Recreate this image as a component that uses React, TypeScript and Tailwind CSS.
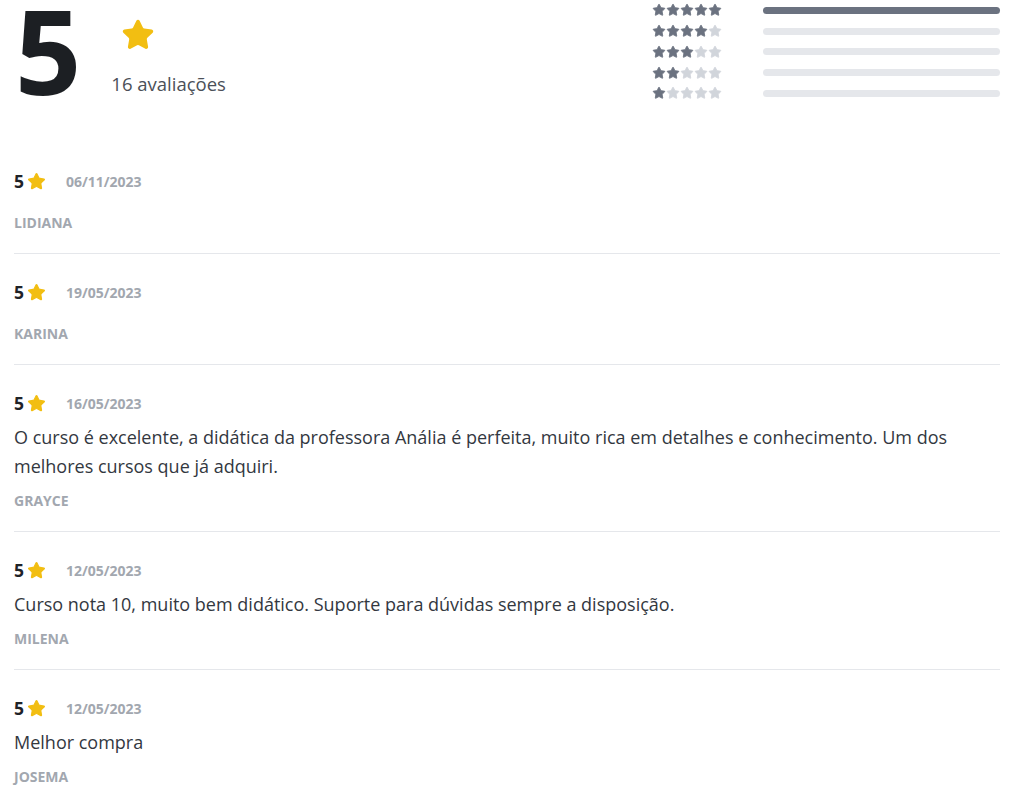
import React from "react";

const StarIcon = ({ className }: { className?: string }) => (
  <svg viewBox="0 0 24 24" className={className} fill="currentColor" stroke="currentColor" strokeWidth={1.5} strokeLinejoin="round" strokeLinecap="round">
    <path d="M11.525 2.295a.53.53 0 0 1 .95 0l2.31 4.679a2.123 2.123 0 0 0 1.595 1.16l5.166.756a.53.53 0 0 1 .294.904l-3.736 3.638a2.123 2.123 0 0 0-.611 1.878l.882 5.14a.53.53 0 0 1-.771.56l-4.618-2.428a2.122 2.122 0 0 0-1.973 0L6.396 21.01a.53.53 0 0 1-.77-.56l.881-5.139a2.122 2.122 0 0 0-.611-1.879L2.16 9.795a.53.53 0 0 1 .294-.906l5.165-.755a2.122 2.122 0 0 0 1.597-1.16z" />
  </svg>
);

const reviews = [
  { date: "06/11/2023", name: "LIDIANA", text: "" },
  { date: "19/05/2023", name: "KARINA", text: "" },
  {
    date: "16/05/2023",
    name: "GRAYCE",
    text: "O curso é excelente, a didática da professora Anália é perfeita, muito rica em detalhes e conhecimento. Um dos melhores cursos que já adquiri.",
  },
  { date: "12/05/2023", name: "MILENA", text: "Curso nota 10, muito bem didático. Suporte para dúvidas sempre a disposição." },
  { date: "12/05/2023", name: "JOSEMA", text: "Melhor compra" },
];

export default function App() {
  const font = { fontFamily: "'Open Sans', Lato, sans-serif" };
  return (
    <div className="w-[1024px] h-[787px] overflow-hidden bg-white pl-[14px] pr-[24px]" style={font}>
      <div className="flex justify-between h-[143px]">
        <div className="flex items-start">
          <div className="text-[116px] leading-[100px] font-bold text-[#1c1f23] ml-[1px]">5</div>
          <div className="flex flex-col ml-[32px]">
            <StarIcon className="w-[34px] h-[34px] text-[#f2be12] mt-[18px] ml-[8px]" />
            <div className="text-[18.5px] text-[#4b5058] mt-[18px] ml-[-2px]">16 avaliações</div>
          </div>
        </div>
        <div className="flex flex-col w-[348px]">
          {[5, 4, 3, 2, 1].map((n) => (
            <div key={n} className="flex items-center h-[20.75px]">
              <div className="flex w-[70px]">
                {[1, 2, 3, 4, 5].map((i) => (
                  <StarIcon key={i} className={`w-[14px] h-[14px] ${i <= n ? "text-[#6b7280]" : "text-[#d1d5db]"}`} />
                ))}
              </div>
              <div className={`ml-[41px] w-[237px] h-[7px] rounded-full ${n === 5 ? "bg-[#6b7280]" : "bg-[#e5e7eb]"}`} />
            </div>
          ))}
        </div>
      </div>
      <div>
        {reviews.map((r, idx) => (
          <div key={idx} className={`pt-[26px] pb-[20px] ${idx < reviews.length - 1 ? "border-b border-[#e5e7eb]" : ""}`}>
            <div className="flex items-center h-[24px]">
              <span className="text-[17.5px] font-bold text-[#1f2328]">5</span>
              <StarIcon className="w-[19px] h-[19px] text-[#f2be12] ml-[3px]" />
              <span className="ml-[20px] text-[14px] font-bold text-[#a2a7af]">{r.date}</span>
            </div>
            {r.text ? (
              <div className="mt-[8px] text-[18px] leading-[29px] text-[#33383f]">{r.text}</div>
            ) : null}
            <div className={`${r.text ? "mt-[10px]" : "mt-[20px]"} h-[20px] leading-[20px] text-[14px] font-bold text-[#a2a7af]`}>
              {r.name}
            </div>
          </div>
        ))}
      </div>
    </div>
  );
}
